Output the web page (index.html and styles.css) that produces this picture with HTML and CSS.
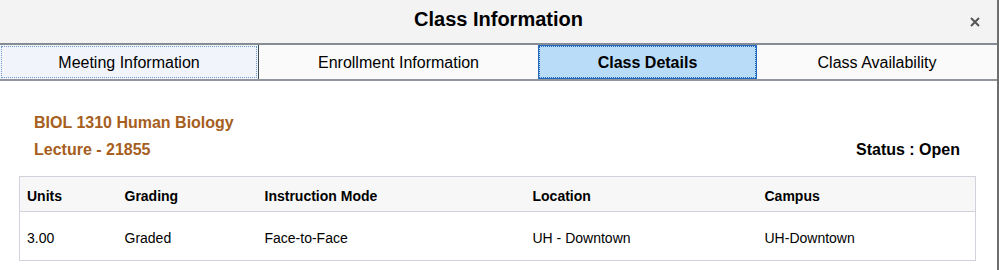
FILE: index.html
```html
<!DOCTYPE html>
<html lang="en">
<head>
    <meta charset="UTF-8">
    <title>Class Information</title>
    <link rel="stylesheet" href="styles.css">
</head>
<body>
    <div class="dialog">
        <div class="dialogHead">
            <h1>Class Information</h1>
            <a class="closeBtn" href="javascript:void(0);">
                <svg width="10" height="10" viewBox="0 0 10 10">
                    <path d="M1 1 L9 9 M9 1 L1 9" stroke="#555" stroke-width="2"/>
                </svg>
            </a>
        </div>
        <ul class="tabList">
            <li class="tab focus">Meeting Information</li>
            <li class="tab">Enrollment Information</li>
            <li class="tab now">Class Details</li>
            <li class="tab">Class Availability</li>
        </ul>
        <div class="content">
            <div class="classTitle">BIOL 1310 Human Biology</div>
            <div class="classLine">
                <span class="classTitle">Lecture - 21855</span>
                <span class="status">Status : Open</span>
            </div>
            <table class="detailTable">
                <colgroup>
                    <col style="width: 98px">
                    <col style="width: 140px">
                    <col style="width: 268px">
                    <col style="width: 232px">
                    <col>
                </colgroup>
                <thead>
                    <tr>
                        <th>Units</th>
                        <th>Grading</th>
                        <th>Instruction Mode</th>
                        <th>Location</th>
                        <th>Campus</th>
                    </tr>
                </thead>
                <tbody>
                    <tr>
                        <td>3.00</td>
                        <td>Graded</td>
                        <td>Face-to-Face</td>
                        <td>UH - Downtown</td>
                        <td>UH-Downtown</td>
                    </tr>
                </tbody>
            </table>
        </div>
    </div>
</body>
</html>
```

FILE: styles.css
```css
* {
    padding: 0;
    margin: 0;
    box-sizing: border-box;
}

body {
    font-family: "Liberation Sans", Arial, sans-serif;
    color: #000;
    background: #fff;
}

div.dialog {
    width: 999px;
    height: 270px;
    border-right: 2px solid #6e6e6e;
    background: #fff;
}

div.dialogHead {
    height: 43px;
    background: #f3f3f3;
    display: flex;
    align-items: center;
    justify-content: center;
    position: relative;
}

div.dialogHead h1 {
    font-size: 20px;
    font-weight: bold;
    margin-top: -4px;
}

a.closeBtn {
    position: absolute;
    right: 17px;
    top: 17px;
    display: block;
    width: 10px;
    height: 10px;
}

a.closeBtn svg {
    display: block;
}

ul.tabList {
    list-style: none;
    display: flex;
    height: 38px;
    border-top: 2px solid #858c94;
    border-bottom: 2px solid #8f959b;
}

ul.tabList li.tab {
    height: 100%;
    display: flex;
    align-items: center;
    justify-content: center;
    padding-top: 2px;
    font-size: 16px;
    background: #fafafa;
}

ul.tabList li.tab:nth-child(1) {
    width: 258px;
}

ul.tabList li.tab:nth-child(2) {
    width: 280px;
    border-left: 1px solid #3d4852;
}

ul.tabList li.tab:nth-child(3) {
    width: 219px;
}

ul.tabList li.tab:nth-child(4) {
    flex: 1;
}

ul.tabList li.focus {
    background: #f1f5fb;
    outline: 1px dotted #6c9bd3;
    outline-offset: -2px;
}

ul.tabList li.now {
    background: #b9dcf8;
    font-weight: bold;
    border: 1px solid #2468c0;
    outline: 1px dotted #2468c0;
    outline-offset: -2px;
}

div.content {
    padding: 28px 37px 0 0;
}

div.classTitle,
span.classTitle {
    color: #a65e21;
    font-weight: bold;
    font-size: 16px;
    line-height: 27px;
}

div.classTitle {
    padding-left: 34px;
}

div.classLine {
    display: flex;
    justify-content: space-between;
    padding-left: 34px;
}

span.status {
    font-weight: bold;
    font-size: 16px;
    line-height: 27px;
}

table.detailTable {
    margin: 13px 0 0 19px;
    width: 957px;
    border-collapse: collapse;
    table-layout: fixed;
    border: 1px solid #d2d2da;
    font-size: 14px;
}

table.detailTable th {
    background: #f7f7f7;
    text-align: left;
    font-weight: bold;
    height: 35px;
    padding: 3px 0 0 7px;
    border-bottom: 1px solid #d2d2da;
}

table.detailTable td {
    height: 49px;
    padding: 3px 0 0 7px;
    font-weight: normal;
}
```
